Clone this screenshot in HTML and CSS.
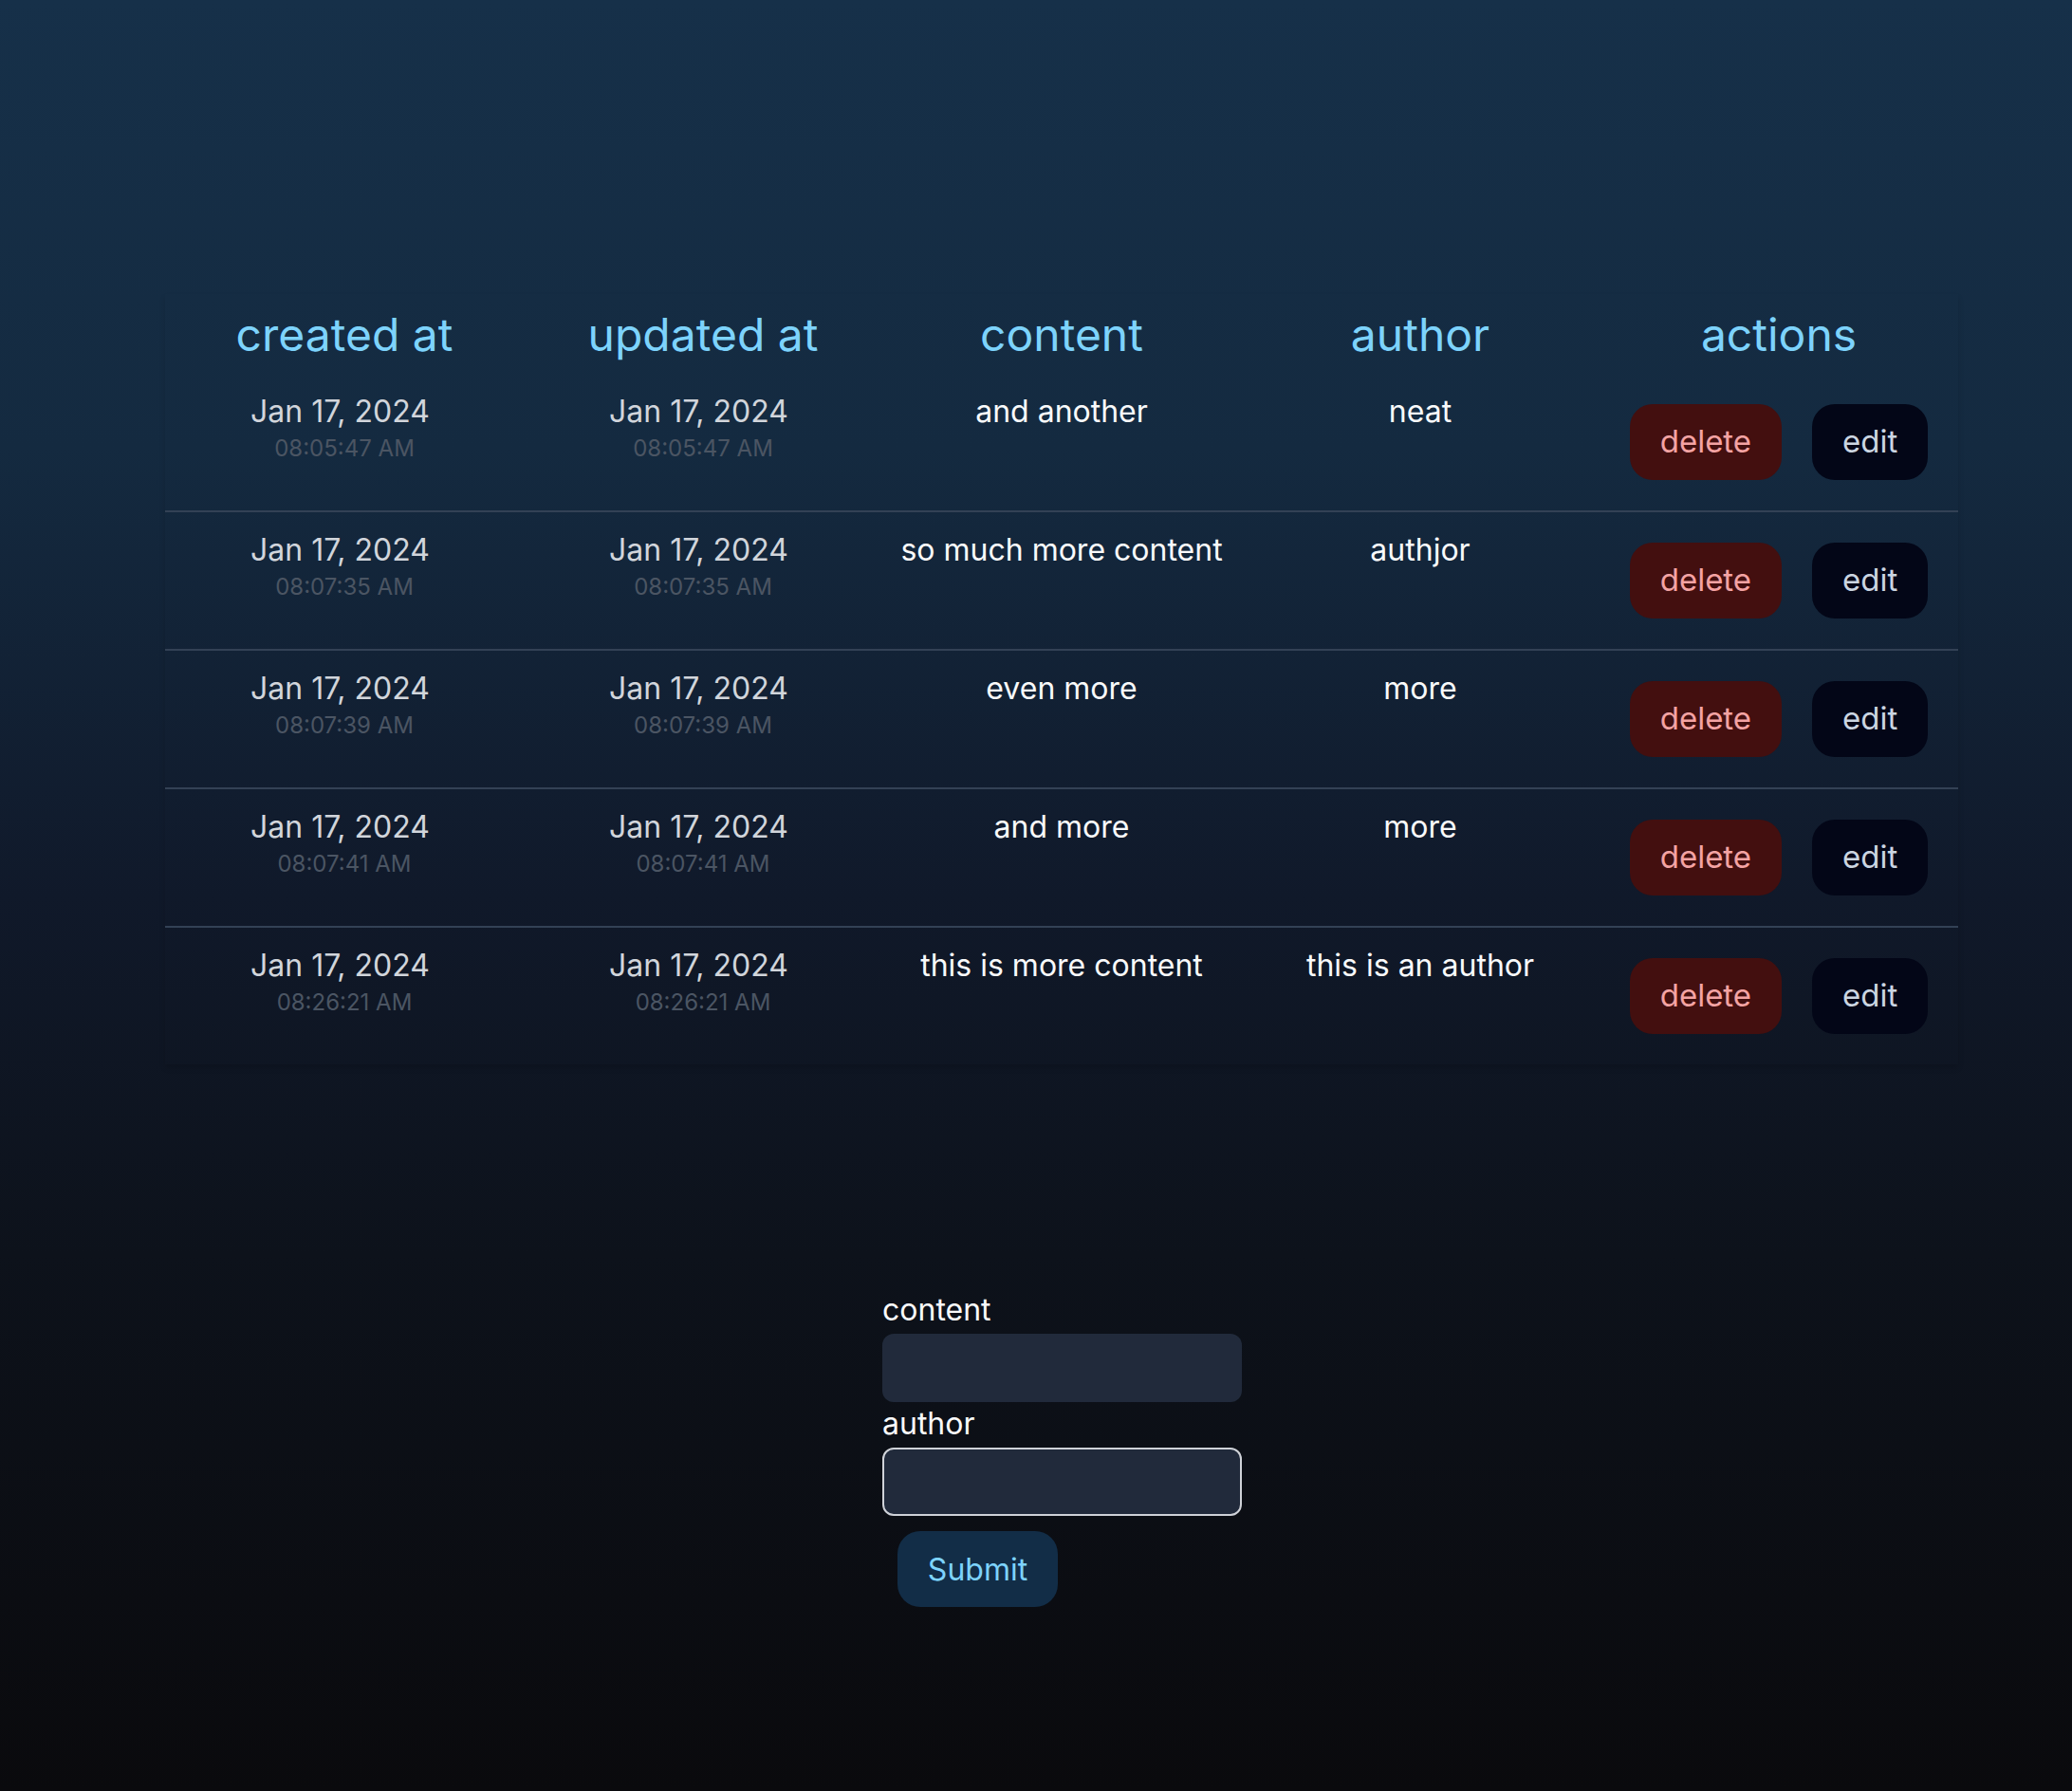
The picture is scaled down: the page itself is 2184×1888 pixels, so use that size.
FILE: index.html
```html
<!DOCTYPE html>
<html lang="en">
<head>
<meta charset="utf-8">
<title>Posts</title>
<link rel="stylesheet" href="styles.css">
</head>
<body>
<main class="page">
  <div class="panel">
    <table class="posts">
      <thead>
        <tr>
          <th>created at</th>
          <th>updated at</th>
          <th>content</th>
          <th>author</th>
          <th>actions</th>
        </tr>
      </thead>
      <tbody>
        <tr>
          <td><div class="date">Jan 17, 2024</div><div class="time">08:05:47 AM</div></td>
          <td><div class="date">Jan 17, 2024</div><div class="time">08:05:47 AM</div></td>
          <td class="text">and another</td>
          <td class="text">neat</td>
          <td class="actions"><div class="btns"><button class="btn del">delete</button><button class="btn edit">edit</button></div></td>
        </tr>
        <tr>
          <td><div class="date">Jan 17, 2024</div><div class="time">08:07:35 AM</div></td>
          <td><div class="date">Jan 17, 2024</div><div class="time">08:07:35 AM</div></td>
          <td class="text">so much more content</td>
          <td class="text">authjor</td>
          <td class="actions"><div class="btns"><button class="btn del">delete</button><button class="btn edit">edit</button></div></td>
        </tr>
        <tr>
          <td><div class="date">Jan 17, 2024</div><div class="time">08:07:39 AM</div></td>
          <td><div class="date">Jan 17, 2024</div><div class="time">08:07:39 AM</div></td>
          <td class="text">even more</td>
          <td class="text">more</td>
          <td class="actions"><div class="btns"><button class="btn del">delete</button><button class="btn edit">edit</button></div></td>
        </tr>
        <tr>
          <td><div class="date">Jan 17, 2024</div><div class="time">08:07:41 AM</div></td>
          <td><div class="date">Jan 17, 2024</div><div class="time">08:07:41 AM</div></td>
          <td class="text">and more</td>
          <td class="text">more</td>
          <td class="actions"><div class="btns"><button class="btn del">delete</button><button class="btn edit">edit</button></div></td>
        </tr>
        <tr>
          <td><div class="date">Jan 17, 2024</div><div class="time">08:26:21 AM</div></td>
          <td><div class="date">Jan 17, 2024</div><div class="time">08:26:21 AM</div></td>
          <td class="text">this is more content</td>
          <td class="text">this is an author</td>
          <td class="actions"><div class="btns"><button class="btn del">delete</button><button class="btn edit">edit</button></div></td>
        </tr>
      </tbody>
    </table>
  </div>

  <form class="form">
    <label class="label" for="content">content</label>
    <input class="input" id="content" type="text">
    <label class="label" for="author">author</label>
    <input class="input focused" id="author" type="text">
    <button class="submit" type="button">Submit</button>
  </form>
</main>
</body>
</html>
```

FILE: styles.css
```css
html, body {
  margin: 0;
  padding: 0;
}

body {
  min-height: 1888px;
  background: linear-gradient(to bottom, #163049 0%, #142a40 25%, #10192a 50%, #0d121b 70%, #0a0a0d 100%);
  font-family: Inter, "Noto Sans", sans-serif;
  color: #f3f4f6;
}

.page {
  display: flex;
  flex-direction: column;
  align-items: flex-start;
  padding-top: 310px;
  padding-left: 174px;
}

.panel {
  width: 1890px;
  background: rgba(255, 255, 255, 0.004);
  box-shadow: 0 4px 6px rgba(0, 0, 0, 0.14);
}

.posts {
  width: 100%;
  border-collapse: collapse;
  table-layout: fixed;
}

.posts th {
  font-size: 48px;
  line-height: 54px;
  font-weight: 400;
  color: #7dd3fc;
  padding: 16px 0 14px;
  text-align: center;
}

.posts tbody tr {
  border-bottom: 2px solid #334155;
}

.posts tbody tr:last-child {
  border-bottom: none;
}

.posts td {
  padding: 19px 0 0;
  vertical-align: top;
  text-align: center;
}

.date {
  font-size: 32px;
  line-height: 42px;
  color: #d1d5db;
  padding-right: 9px;
}

.time {
  font-size: 24px;
  line-height: 36px;
  color: #4b5563;
}

.posts td.text {
  font-size: 32px;
  line-height: 42px;
  color: #f9fafb;
}

.posts td.actions {
  padding: 32px 0;
}

.btns {
  display: flex;
  justify-content: center;
  gap: 32px;
}

.btn {
  height: 80px;
  padding: 0 32px 2px;
  border: none;
  border-radius: 24px;
  font-family: Inter, "Noto Sans", sans-serif;
  font-size: 33px;
}

.del {
  background: #430f0f;
  color: #f4a3a3;
}

.edit {
  background: #030617;
  color: #cbd5e1;
}

.form {
  margin-top: 236px;
  margin-left: 756px;
  width: 379px;
  display: flex;
  flex-direction: column;
  align-items: flex-start;
}

.label {
  font-size: 32px;
  line-height: 46px;
  color: #f9fafb;
}

.input {
  box-sizing: border-box;
  width: 379px;
  height: 72px;
  margin-top: 2px;
  border: none;
  border-radius: 12px;
  background: #212a3b;
  color: #f9fafb;
  font-size: 30px;
  padding: 0 16px;
}

.input.focused {
  border: 2px solid #cfd2d8;
}

.submit {
  margin: 16px 0 0 16px;
  width: 169px;
  height: 80px;
  border: none;
  border-radius: 24px;
  background: #122d47;
  color: #7dd3fc;
  font-family: Inter, "Noto Sans", sans-serif;
  font-size: 32px;
}
```
